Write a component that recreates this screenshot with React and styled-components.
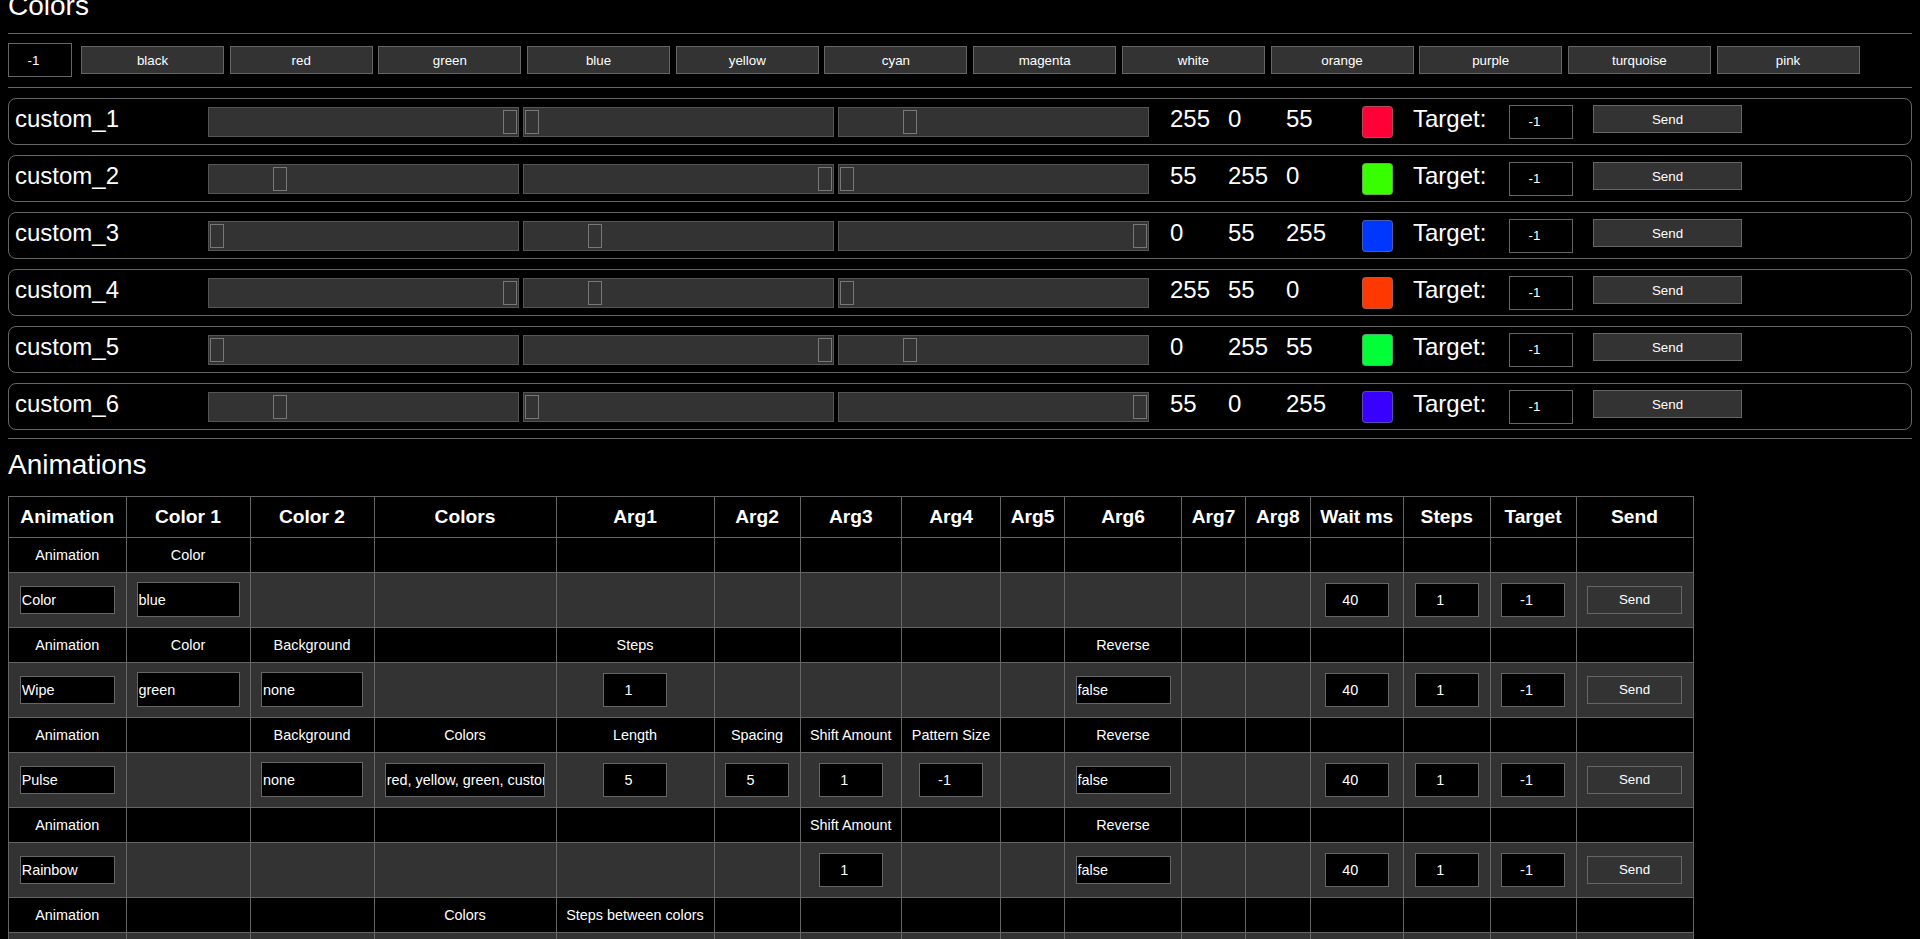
import React from 'react';
import styled, { createGlobalStyle } from 'styled-components';

const GlobalStyle = createGlobalStyle`
  * { box-sizing: border-box; }
  html, body { margin: 0; padding: 0; background: #000; overflow: hidden; }
  body { color: #fff; font-family: "Liberation Sans", Arial, Helvetica, sans-serif; }
  input, button { font-family: inherit; }
`;

const Page = styled.div`
  padding: 0 8px;
`;

const SectionTitle = styled.h2`
  margin: ${p => p.$offset}px 0 0;
  font-size: 28px;
  font-weight: 400;
  line-height: 32px;
`;

const Divider = styled.div`
  height: 1px;
  background: #666;
  margin-top: ${p => p.$gap}px;
`;

const PresetRow = styled.div`
  display: flex;
  align-items: center;
  height: 34px;
  margin-top: 9px;
`;

const PresetButtons = styled.div`
  display: flex;
  gap: 5.7px;
  margin-left: 9px;
`;

const DarkButton = styled.button`
  width: ${p => p.$w}px;
  height: ${p => p.$h}px;
  flex: none;
  background: #333;
  border: 1px solid #666;
  color: #fff;
  font-size: 13.33px;
  padding: 0;
  cursor: pointer;
`;

const NumField = styled.input`
  display: ${p => (p.$block ? 'block' : 'inline-block')};
  margin: ${p => (p.$block ? '0 auto' : '0')};
  width: 64px;
  height: ${p => p.$h || 34}px;
  flex: none;
  background: #000;
  border: 1px solid #666;
  color: #fff;
  font-size: ${p => p.$fs || 14.4}px;
  text-align: center;
  padding: 0 14px 0 1px;
  outline: none;
`;

const ColorList = styled.div`
  display: flex;
  flex-direction: column;
  gap: 10px;
  margin-top: 10px;
`;

const ColorRow = styled.div`
  height: 47px;
  border: 1px solid #666;
  border-radius: 8px;
  display: flex;
  align-items: center;
  padding-left: 6px;
`;

const RowText = styled.span`
  flex: none;
  width: ${p => (p.$w ? `${p.$w}px` : 'auto')};
  margin-left: ${p => p.$ml || 0}px;
  margin-bottom: 6px;
  font-size: 24px;
  line-height: 28px;
  white-space: nowrap;
`;

const Tracks = styled.div`
  display: flex;
  gap: 4px;
  flex: none;
`;

const Track = styled.div`
  position: relative;
  width: 311px;
  height: 30px;
  background: #333;
  border: 1px solid #555;
`;

const Thumb = styled.div`
  position: absolute;
  top: 2px;
  width: 14px;
  height: 24px;
  background: #333;
  border: 1px solid #777;
`;

const Swatch = styled.div`
  flex: none;
  width: 31px;
  height: 32px;
  margin-left: ${p => p.$ml}px;
  border-radius: 4px;
  border: 1px solid rgba(120, 120, 120, 0.6);
  background: ${p => p.$color};
`;

const Spaced = styled.div`
  margin-left: ${p => p.$ml}px;
  margin-bottom: ${p => p.$mb || 0}px;
  flex: none;
  display: flex;
`;

const TableBlock = styled.div`
  margin-top: 14.7px;
`;

const Table = styled.table`
  border-collapse: collapse;
  table-layout: fixed;
  width: 1684.5px;
  font-size: 14.4px;
`;

const HeadCell = styled.th`
  border: 1px solid #666;
  font-size: 19.2px;
  font-weight: 700;
  text-align: center;
  padding: 0;
`;

const Row = styled.tr`
  height: ${p => p.$h}px;
  background: ${p => p.$bg};
`;

const Cell = styled.td`
  border: 1px solid #666;
  text-align: center;
  vertical-align: middle;
  padding: 0;
  white-space: nowrap;
  overflow: hidden;
`;

const TextField = styled.input`
  display: block;
  margin: 0 auto;
  width: ${p => p.$w}px;
  height: ${p => p.$h}px;
  background: #000;
  border: 1px solid #666;
  color: #fff;
  font-size: 14.4px;
  padding: 0 0 0 1px;
  text-align: left;
  outline: none;
`;

const TableSend = styled(DarkButton)`
  display: block;
  margin: 0 auto;
`;

const presets = ['black', 'red', 'green', 'blue', 'yellow', 'cyan', 'magenta', 'white', 'orange', 'purple', 'turquoise', 'pink'];

const customs = [
  { name: 'custom_1', rgb: [255, 0, 55] },
  { name: 'custom_2', rgb: [55, 255, 0] },
  { name: 'custom_3', rgb: [0, 55, 255] },
  { name: 'custom_4', rgb: [255, 55, 0] },
  { name: 'custom_5', rgb: [0, 255, 55] },
  { name: 'custom_6', rgb: [55, 0, 255] },
];

const columns = [
  { t: 'Animation', w: 117.5 }, { t: 'Color 1', w: 124 }, { t: 'Color 2', w: 124 }, { t: 'Colors', w: 182 },
  { t: 'Arg1', w: 158 }, { t: 'Arg2', w: 86 }, { t: 'Arg3', w: 101.5 }, { t: 'Arg4', w: 99 },
  { t: 'Arg5', w: 64 }, { t: 'Arg6', w: 117 }, { t: 'Arg7', w: 64 }, { t: 'Arg8', w: 64.5 },
  { t: 'Wait ms', w: 93.5 }, { t: 'Steps', w: 86.5 }, { t: 'Target', w: 86 }, { t: 'Send', w: 117 },
];

const tail = { 12: { k: 'num', v: '40' }, 13: { k: 'num', v: '1' }, 14: { k: 'num', v: '-1' }, 15: { k: 'send' } };

const animations = [
  {
    labels: { 0: 'Animation', 1: 'Color' },
    inputs: { 0: { k: 'short', v: 'Color' }, 1: { k: 'tall', v: 'blue' }, ...tail },
  },
  {
    labels: { 0: 'Animation', 1: 'Color', 2: 'Background', 4: 'Steps', 9: 'Reverse' },
    inputs: {
      0: { k: 'short', v: 'Wipe' }, 1: { k: 'tall', v: 'green' }, 2: { k: 'tall2', v: 'none' },
      4: { k: 'num', v: '1' }, 9: { k: 'short', v: 'false' }, ...tail,
    },
  },
  {
    labels: { 0: 'Animation', 2: 'Background', 3: 'Colors', 4: 'Length', 5: 'Spacing', 6: 'Shift Amount', 7: 'Pattern Size', 9: 'Reverse' },
    inputs: {
      0: { k: 'short', v: 'Pulse' }, 2: { k: 'tall2', v: 'none' }, 3: { k: 'wide', v: 'red, yellow, green, custom_1, custom_2' },
      4: { k: 'num', v: '5' }, 5: { k: 'num', v: '5' }, 6: { k: 'num', v: '1' }, 7: { k: 'num', v: '-1' },
      9: { k: 'short', v: 'false' }, ...tail,
    },
  },
  {
    labels: { 0: 'Animation', 6: 'Shift Amount', 9: 'Reverse' },
    inputs: { 0: { k: 'short', v: 'Rainbow' }, 6: { k: 'num', v: '1' }, 9: { k: 'short', v: 'false' }, ...tail },
  },
  {
    labels: { 0: 'Animation', 3: 'Colors', 4: 'Steps between colors' },
    inputs: {},
  },
];

const sizes = {
  short: [95, 28],
  tall: [103, 35],
  tall2: [102, 35],
  wide: [160.5, 34],
};

function renderInput(spec) {
  if (!spec) return null;
  if (spec.k === 'send') return <TableSend $w={95} $h={28}>Send</TableSend>;
  if (spec.k === 'num') return <NumField $block defaultValue={spec.v} />;
  const [w, h] = sizes[spec.k];
  return <TextField $w={w} $h={h} defaultValue={spec.v} />;
}

export default function App() {
  return (
    <>
      <GlobalStyle />
      <Page>
        <SectionTitle $offset={-10}>Colors</SectionTitle>
        <Divider $gap={11} />
        <PresetRow>
          <NumField $fs={13.33} defaultValue="-1" />
          <PresetButtons>
            {presets.map(p => (
              <DarkButton key={p} $w={143} $h={28}>{p}</DarkButton>
            ))}
          </PresetButtons>
        </PresetRow>
        <Divider $gap={10} />
        <ColorList>
          {customs.map(c => (
            <ColorRow key={c.name}>
              <RowText $w={193}>{c.name}</RowText>
              <Tracks>
                {c.rgb.map((v, i) => (
                  <Track key={i}>
                    <Thumb style={{ left: `${1 + (v / 255) * 293}px` }} />
                  </Track>
                ))}
              </Tracks>
              <RowText $w={58} $ml={21}>{c.rgb[0]}</RowText>
              <RowText $w={58}>{c.rgb[1]}</RowText>
              <RowText $w={57}>{c.rgb[2]}</RowText>
              <Swatch $ml={19} $color={`rgb(${c.rgb.join(',')})`} />
              <RowText $ml={20} $w={96}>Target:</RowText>
              <Spaced $ml={0}>
                <NumField $fs={13.33} $h={34} defaultValue="-1" />
              </Spaced>
              <Spaced $ml={20} $mb={5}>
                <DarkButton $w={149} $h={28}>Send</DarkButton>
              </Spaced>
            </ColorRow>
          ))}
        </ColorList>
        <Divider $gap={8} />
        <SectionTitle $offset={10.3}>Animations</SectionTitle>
        <TableBlock>
          <Table>
            <colgroup>
              {columns.map(c => <col key={c.t} style={{ width: `${c.w}px` }} />)}
            </colgroup>
            <thead>
              <Row $h={41} $bg="#000">
                {columns.map(c => <HeadCell key={c.t}>{c.t}</HeadCell>)}
              </Row>
            </thead>
            <tbody>
              {animations.map((a, ri) => (
                <React.Fragment key={ri}>
                  <Row $h={35} $bg="#000">
                    {columns.map((c, ci) => <Cell key={ci}>{a.labels[ci] || ''}</Cell>)}
                  </Row>
                  <Row $h={55} $bg="#333">
                    {columns.map((c, ci) => <Cell key={ci}>{renderInput(a.inputs[ci])}</Cell>)}
                  </Row>
                </React.Fragment>
              ))}
            </tbody>
          </Table>
        </TableBlock>
      </Page>
    </>
  );
}
